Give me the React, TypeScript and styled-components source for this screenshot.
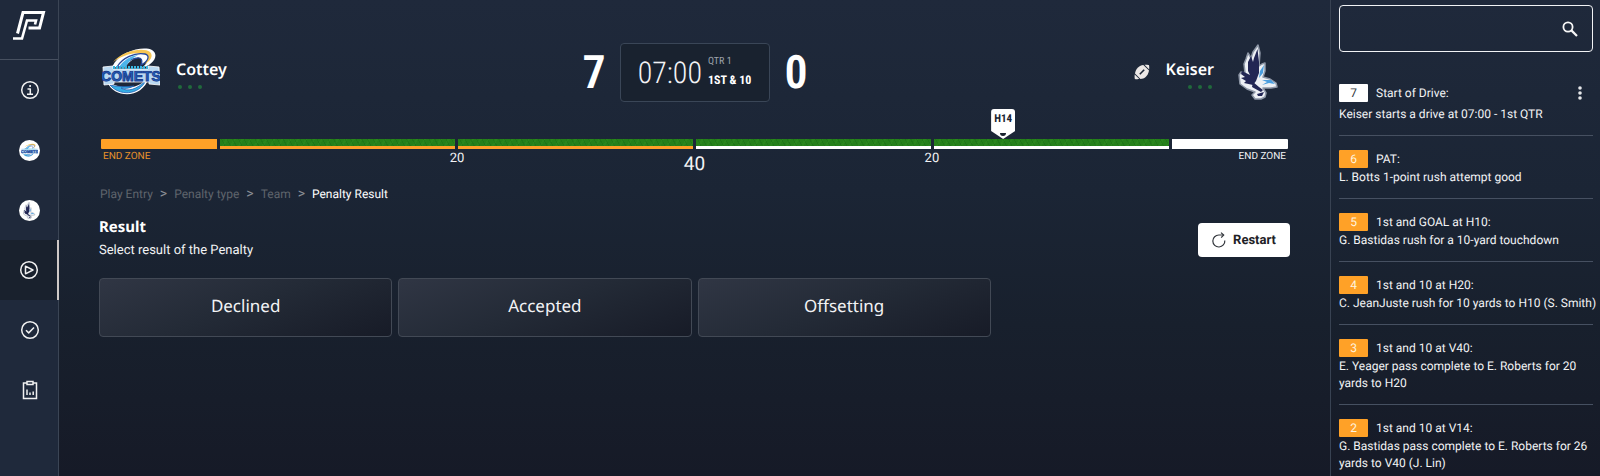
import React from "react";
import styled, { createGlobalStyle } from "styled-components";

const body = `Roboto, "Liberation Sans", sans-serif`;
const heading = `"Noto Sans", "Open Sans", sans-serif`;
const condensed = `"Liberation Sans Narrow", "Roboto Condensed", "DejaVu Sans Condensed", sans-serif`;

const orange = "#ffa127";

const GlobalStyle = createGlobalStyle`
  *, *::before, *::after { box-sizing: border-box; }
  body { margin: 0; background: #161a27; color: #f2f3f5; font-family: ${body}; font-size: 12px; text-rendering: geometricPrecision; }
  button { font: inherit; color: inherit; cursor: pointer; text-rendering: inherit; }
  h1, h2, h3, p, ol, ul { margin: 0; padding: 0; }
  ol, ul { list-style: none; }
`;

const Page = styled.div`
  display: grid;
  grid-template-columns: 59px minmax(0, 1fr) 270px;
  min-height: 100vh;
  background: linear-gradient(180deg, #1f293b 0%, #1b2535 40%, #18202d 68%, #161a27 100%);
`;

const Sidebar = styled.nav`
  display: flex;
  flex-direction: column;
  background: #1f293b;
  border-right: 1px solid #3b4555;
`;

const Brand = styled.a`
  display: block;
  height: 60px;
  border-bottom: 1px solid #475060;
`;

const NavItem = styled.a<{ $active?: boolean }>`
  display: flex;
  align-items: center;
  justify-content: center;
  height: 60px;
  margin-right: -1px;
  color: #f1f1f1;
  border-right: ${(p) => (p.$active ? "2px solid #cfc9c6" : "0")};
  background: ${(p) => (p.$active ? "#19212d" : "transparent")};
`;

const Avatar = styled.span`
  display: flex;
  align-items: center;
  justify-content: center;
  width: 21px;
  height: 21px;
  border-radius: 50%;
  background: #fff;
`;

const Main = styled.main`
  padding: 42px 40px 24px;
`;

const Scoreboard = styled.header`
  display: grid;
  grid-template-columns: 1fr auto 1fr;
  align-items: center;
  height: 59px;
`;

const Team = styled.section<{ $away?: boolean }>`
  display: flex;
  flex-direction: ${(p) => (p.$away ? "row-reverse" : "row")};
  align-items: center;
  gap: 16px;
  padding: ${(p) => (p.$away ? "0 12px 0 0" : "0 0 0 3px")};
`;

const TeamText = styled.div<{ $away?: boolean }>`
  display: flex;
  flex-direction: column;
  align-items: ${(p) => (p.$away ? "flex-end" : "flex-start")};
  padding: 3px ${(p) => (p.$away ? "8px" : "0")} 0 0;
`;

const TeamName = styled.h2`
  font: 600 16px/22px ${heading};
  color: #fff;
`;

const Timeouts = styled.div`
  display: flex;
  gap: 6px;
  padding: 5px 2px 0;
`;

const Timeout = styled.i`
  width: 4px;
  height: 4px;
  border-radius: 50%;
  background: #20693b;
`;

const Score = styled.div`
  font: 600 46px/58px ${condensed};
  color: #fff;
  width: 22px;
  padding-top: 2px;
  text-align: center;
`;

const Center = styled.div`
  display: flex;
  align-items: center;
  gap: 15px;
`;

const Clock = styled.div`
  display: flex;
  align-items: center;
  justify-content: center;
  gap: 6px;
  width: 150px;
  height: 59px;
  background: #19222f;
  border: 1px solid #3a4657;
  border-radius: 4px;
`;

const Time = styled.span`
  padding-top: 3px;
  font: 300 30px/40px ${condensed};
`;

const Down = styled.div`
  display: flex;
  flex-direction: column;
  padding-bottom: 2px;
  font: 700 12px/18px ${condensed};
  color: #fff;
`;

const Quarter = styled.span`
  font-weight: 400;
  font-size: 10px;
  color: #9da3ac;
`;

const Field = styled.section`
  position: relative;
  margin: 38px 2px 0;
`;

const Yards = styled.div`
  display: grid;
  grid-template-columns: 116fr 235fr 235fr 235fr 235fr 116fr;
  gap: 3px;
`;

const Zone = styled.div<{ $color: string; $side: "left" | "right" }>`
  height: 10px;
  background: ${(p) => p.$color};
  border-radius: ${(p) => (p.$side === "left" ? "1px 0 0 1px" : "0 1px 1px 0")};
`;

const Grass = styled.div<{ $color: string }>`
  height: 10px;
  border-bottom: 3px solid ${(p) => p.$color};
  background:
    repeating-linear-gradient(63deg, transparent 0 4px, rgba(8, 80, 14, 0.2) 4px 5px),
    repeating-linear-gradient(118deg, transparent 0 5px, rgba(60, 158, 38, 0.2) 5px 7px),
    #25801a;
`;

const YardLabels = styled.div`
  display: grid;
  grid-template-columns: 236fr 238fr 238fr 238fr 236fr;
  height: 30px;
  padding: 1px 2px 0;
  text-align: center;
  font-size: 13px;
  line-height: 18px;
`;

const ZoneLabel = styled.span<{ $color: string; $align: "left" | "right" }>`
  font-size: 10px;
  line-height: 14px;
  color: ${(p) => p.$color};
  text-align: ${(p) => p.$align};
`;

const Midfield = styled.span`
  font-size: 19px;
  line-height: 28px;
`;

const BallMarker = styled.div`
  position: absolute;
  left: 76%;
  bottom: 100%;
  transform: translateX(-50%);
  width: 24px;
  height: 30px;
  padding-top: 2px;
  text-align: center;
  font: 700 11px/16px ${condensed};
  color: #19222f;
  background: #fff;
  border-radius: 3px;
  clip-path: polygon(0 0, 100% 0, 100% 73%, 50% 100%, 0 73%);

  &::after {
    content: "";
    position: absolute;
    left: 9px;
    bottom: 3px;
    width: 6px;
    height: 3px;
    background: #19222f;
    border-radius: 0 0 3px 3px;
  }
`;

const Breadcrumbs = styled.ol`
  display: flex;
  gap: 7px;
  padding: 6px 1px 0;
  font-size: 12px;
  line-height: 18px;
  color: #5f646c;
`;

const Crumb = styled.a<{ $current?: boolean }>`
  color: ${(p) => (p.$current ? "#fff" : "inherit")};
  text-decoration: none;
`;

const Separator = styled.li`
  font-size: 14px;
  color: #8a8e95;
`;

const ResultHead = styled.div`
  display: flex;
  align-items: center;
  justify-content: space-between;
  padding: 12px 0 17px;
`;

const ResultTitle = styled.h1`
  margin-bottom: 2px;
  font: 700 15px/24px ${heading};
  color: #fff;
`;

const Hint = styled.p`
  font-size: 13px;
  line-height: 20px;
`;

const Restart = styled.button`
  display: flex;
  align-items: center;
  justify-content: center;
  gap: 7px;
  width: 92px;
  height: 34px;
  margin-top: 4px;
  padding: 0;
  border: 0;
  border-radius: 4px;
  background: #fff;
  color: #1e2126;
  font-size: 13px;
  font-weight: 700;
`;

const Options = styled.div`
  display: grid;
  grid-template-columns: repeat(4, 1fr);
  gap: 6px;
`;

const Option = styled.button`
  height: 59px;
  padding: 0 0 3px;
  border: 1px solid #424955;
  border-radius: 4px;
  background: linear-gradient(160deg, #303644 0%, #232a36 50%, #171b27 100%);
  font: 400 17px/24px ${heading};
  color: #f2f3f5;
`;

const Log = styled.aside`
  border-left: 1px solid #384252;
  padding: 5px 7px 0 8px;
`;

const Search = styled.form`
  display: flex;
  align-items: center;
  height: 47px;
  margin-bottom: 17px;
  border: 1px solid #f2f3f5;
  border-radius: 4px;
`;

const SearchInput = styled.input`
  flex: 1;
  min-width: 0;
  height: 100%;
  padding: 0 12px;
  border: 0;
  outline: 0;
  background: transparent;
  color: #fff;
  font: 14px/20px ${body};
`;

const IconButton = styled.button`
  display: flex;
  align-items: center;
  justify-content: center;
  width: 22px;
  height: 20px;
  padding: 0;
  border: 0;
  background: transparent;
`;

const SearchButton = styled(IconButton)`
  margin-right: 11px;
`;

const MenuButton = styled(IconButton)`
  margin: 0 2px 0 auto;
`;

const Play = styled.li`
  padding: 14px 0 12px;
  border-bottom: 1px solid #465061;
  line-height: 17px;

  &:last-child {
    padding-bottom: 0;
    border-bottom: 0;
  }
`;

const PlayHead = styled.div<{ $withMenu?: boolean }>`
  display: flex;
  align-items: center;
  gap: 8px;
  margin-bottom: ${(p) => (p.$withMenu ? 3 : 1)}px;
`;

const PlayText = styled.p`
  margin-right: -7px;
`;

const PlayNumber = styled.span<{ $light?: boolean }>`
  width: 29px;
  height: 18px;
  text-align: center;
  line-height: 18px;
  border-radius: 1px;
  color: ${(p) => (p.$light ? "#33373d" : "#fff3df")};
  background: ${(p) => (p.$light ? "#fff" : orange)};
`;

const CometsLogo = ({ size }: { size: number }) => (
  <svg width={size} height={(size * 50) / 58} viewBox="0 0 58 50" aria-hidden="true">
    <path d="M10 20C18 3 42-1 50 3c8 5 1 16-11 18 6-4 9-9 5-11-7-3-16 3-22 11z" fill="#fff" />
    <path d="M11 15C21 3 42 0 48 5c4 4 0 9-5 12 4-6 3-9-2-9-8 0-16 5-20 11 2-6 8-11 16-13C27 6 18 10 11 15z" fill="#f7c653" />
    <path d="M15 20C20 11 33 5 43 7c5 1 4 7-4 11 2-5 0-8-4-7-7 1-12 5-14 9z" fill="#fff" stroke="#24479b" strokeWidth="1.300" />
    <path d="M17 20c5-7 11-11 19-12-6 3-10 7-12 12z" fill="#4cb4ec" />
    <path d="M6 36c5 14 34 18 41-6-5 4-9 9-17 10-9 2-15-2-24-4z" fill="#fff" />
    <path d="M8 38c9 11 29 11 36-5-9 10-19 12-25 8 5 1 9 0 13-2-8 1-16 1-24-1z" fill="#36aee4" stroke="#255eb1" strokeWidth="0.800" />
    <path d="M1 20l10-1v3h35v-3l11 1 1 18-11-1v-2H12v2l-10 1z" fill="#b9d8f1" stroke="#fff" strokeWidth="0.800" />
    <text x="29" y="34" textAnchor="middle" fontFamily="Liberation Sans Narrow, sans-serif" fontWeight="700" fontSize="14" fill="#1d66c4" stroke="#1d3c8c" strokeWidth="0.900">COMETS</text>
    <path d="M11 20.500h36" stroke="#38b4df" strokeWidth="3" strokeDasharray="2 1" />
  </svg>
);

const SeahawkLogo = ({ size }: { size: number }) => (
  <svg width={(size * 40) / 56} height={size} viewBox="0 0 40 56" aria-hidden="true">
    <path d="M20 1l2 8-1 13 3-2 3-1 0 8-2 6 7 2 6 4 1 4-6 1-8 0 3 5-1 4-4 2h-6l-3-4 3-3-8-3-7-5-1-9 2-3 4 1-1-9 2-5 2-6 3 5 2-6z" fill="#edf0f4" stroke="#8d96a6" strokeWidth="1.500" strokeLinejoin="round" />
    <path d="M19.500 5L16 14l-1 4-2-6-3 6 0 9 2 4-8-4-1 3 4 3-4 1 5 3-2 2 9 2 3-4 3-8 0-11z" fill="#222654" />
    <path d="M26 21l-4 6-1 7 4-5zM24 36l9 0 4 4-6-1-7 2 5-3z" fill="#4b9ede" />
    <path d="M15 38l6 5 4 3-2 2-9-5zM19 50l7-2-2 4h-4z" fill="#222654" />
  </svg>
);

const BrandMark = () => (
  <svg width="58" height="59" viewBox="0 0 58 59" fill="none" stroke="#fff" strokeWidth="3" aria-hidden="true">
    <path d="M17.500 33.500L23 12.500h20.500L39.500 28h-11" />
    <path d="M13 38.500h9L27 20.500h9l-1 4" strokeWidth="2.600" />
  </svg>
);

const CircleIcon = ({ children }: { children: React.ReactNode }) => (
  <svg width="20" height="20" viewBox="0 0 20 20" fill="none" stroke="currentColor" strokeWidth="1.500" strokeLinejoin="round" aria-hidden="true">
    <circle cx="10" cy="10" r="8.300" />
    {children}
  </svg>
);

const ClipboardIcon = () => (
  <svg width="20" height="20" viewBox="0 0 20 20" fill="none" stroke="currentColor" strokeWidth="1.500" aria-hidden="true">
    <path d="M7 3H3.500v15.500h13V3H13" />
    <path d="M7 1.500h6v3H7z" />
    <path d="M7 9.500V15M10 12.500V15M13.200 11.500V15" />
  </svg>
);

const FootballIcon = () => (
  <svg width="16" height="16" viewBox="0 0 16 16" aria-hidden="true">
    <path d="M10.500.7c2 0 3.700 0 4.400.4.400.8.400 2.500.3 4.300zM.7 10.400c-.2 1.900-.1 3.800.2 4.500.8.300 2.500.400 4.400.2z" fill="#ece8e6" />
    <path d="M9.300 1L15 6.600c-.4 3-2 5.300-3.600 6.600-1.300 1-3 1.600-4.900 1.800L1 9.400c.3-2.500 1.300-4.400 3-6C5.600 2 7.400 1.200 9.300 1z" fill="#ece8e6" />
    <path d="M5.800 10.200l4.400-4.400" stroke="#1c2636" strokeWidth="1.600" />
  </svg>
);

const RestartIcon = () => (
  <svg width="14" height="16" viewBox="0 0 14 16" fill="none" stroke="#33373d" strokeWidth="1.200" aria-hidden="true">
    <path d="M12.800 8.500A6 6 0 1 1 7 3h4.500" />
    <path d="M9 .6L11.700 3 9.200 5.600" />
  </svg>
);

const SearchIcon = () => (
  <svg width="16" height="16" viewBox="0 0 16 16" fill="none" stroke="#f7f7f7" strokeWidth="1.800" aria-hidden="true">
    <circle cx="6" cy="6" r="4.600" />
    <path d="M9.400 9.400L15 15" strokeWidth="2.200" />
  </svg>
);

const MoreIcon = () => (
  <svg width="4" height="14" viewBox="0 0 4 14" fill="#e6e7e9" aria-hidden="true">
    <circle cx="2" cy="2" r="1.800" />
    <circle cx="2" cy="7" r="1.800" />
    <circle cx="2" cy="12" r="1.800" />
  </svg>
);

const TeamTimeouts = () => (
  <Timeouts aria-label="3 timeouts left">
    <Timeout />
    <Timeout />
    <Timeout />
  </Timeouts>
);

const plays = [
  { n: 7, title: "Start of Drive:", text: "Keiser starts a drive at 07:00 - 1st QTR", start: true },
  { n: 6, title: "PAT:", text: "L. Botts 1-point rush attempt good" },
  { n: 5, title: "1st and GOAL at H10:", text: "G. Bastidas rush for a 10-yard touchdown" },
  { n: 4, title: "1st and 10 at H20:", text: "C. JeanJuste rush for 10 yards to H10 (S. Smith)" },
  { n: 3, title: "1st and 10 at V40:", text: "E. Yeager pass complete to E. Roberts for 20 yards to H20" },
  { n: 2, title: "1st and 10 at V14:", text: "G. Bastidas pass complete to E. Roberts for 26 yards to V40 (J. Lin)" },
];

const crumbs = ["Play Entry", "Penalty type", "Team", "Penalty Result"];

export default function App() {
  return (
    <Page>
      <GlobalStyle />
      <Sidebar>
        <Brand href="#" aria-label="Home"><BrandMark /></Brand>
        <NavItem href="#info" aria-label="Game info">
          <CircleIcon>
            <path d="M7.500 9h2.800v5M7 14.200h6" />
            <path d="M9.300 6h1.600" strokeWidth="2" />
          </CircleIcon>
        </NavItem>
        <NavItem href="#home-team" aria-label="Cottey"><Avatar><CometsLogo size={17} /></Avatar></NavItem>
        <NavItem href="#away-team" aria-label="Keiser"><Avatar><SeahawkLogo size={17} /></Avatar></NavItem>
        <NavItem href="#plays" aria-label="Plays" $active>
          <CircleIcon><path d="M6.500 6.200v7.600l7.500-3.800z" /></CircleIcon>
        </NavItem>
        <NavItem href="#review" aria-label="Review">
          <CircleIcon><path d="M6 10.200l2.700 2.700L14 7.500" /></CircleIcon>
        </NavItem>
        <NavItem href="#reports" aria-label="Reports"><ClipboardIcon /></NavItem>
      </Sidebar>

      <Main>
        <Scoreboard>
          <Team>
            <CometsLogo size={58} />
            <TeamText>
              <TeamName>Cottey</TeamName>
              <TeamTimeouts />
            </TeamText>
          </Team>
          <Center>
            <Score>7</Score>
            <Clock>
              <Time>07:00</Time>
              <Down>
                <Quarter>QTR 1</Quarter>
                1ST &amp; 10
              </Down>
            </Clock>
            <Score>0</Score>
          </Center>
          <Team $away>
            <SeahawkLogo size={56} />
            <TeamText $away>
              <TeamName>Keiser</TeamName>
              <TeamTimeouts />
            </TeamText>
            <FootballIcon />
          </Team>
        </Scoreboard>

        <Field aria-label="Field position">
          <BallMarker>H14</BallMarker>
          <Yards>
            <Zone $color={orange} $side="left" />
            <Grass $color={orange} />
            <Grass $color={orange} />
            <Grass $color="#fff" />
            <Grass $color="#fff" />
            <Zone $color="#fff" $side="right" />
          </Yards>
          <YardLabels>
            <ZoneLabel $color="#e8922a" $align="left">END ZONE</ZoneLabel>
            <span>20</span>
            <Midfield>40</Midfield>
            <span>20</span>
            <ZoneLabel $color="#f2f3f5" $align="right">END ZONE</ZoneLabel>
          </YardLabels>
        </Field>

        <Breadcrumbs>
          {crumbs.map((label, i) => (
            <React.Fragment key={label}>
              {i > 0 && <Separator aria-hidden="true">&gt;</Separator>}
              <li><Crumb href="#" $current={i === crumbs.length - 1}>{label}</Crumb></li>
            </React.Fragment>
          ))}
        </Breadcrumbs>

        <ResultHead>
          <div>
            <ResultTitle>Result</ResultTitle>
            <Hint>Select result of the Penalty</Hint>
          </div>
          <Restart type="button"><RestartIcon />Restart</Restart>
        </ResultHead>

        <Options>
          <Option type="button">Declined</Option>
          <Option type="button">Accepted</Option>
          <Option type="button">Offsetting</Option>
        </Options>
      </Main>

      <Log>
        <Search role="search" onSubmit={(e) => e.preventDefault()}>
          <SearchInput type="text" aria-label="Search plays" />
          <SearchButton type="submit" aria-label="Search"><SearchIcon /></SearchButton>
        </Search>
        <ol>
          {plays.map((play) => (
            <Play key={play.n}>
              <PlayHead $withMenu={play.start}>
                <PlayNumber $light={play.start}>{play.n}</PlayNumber>
                <span>{play.title}</span>
                {play.start && <MenuButton type="button" aria-label="Play options"><MoreIcon /></MenuButton>}
              </PlayHead>
              <PlayText>{play.text}</PlayText>
            </Play>
          ))}
        </ol>
      </Log>
    </Page>
  );
}
